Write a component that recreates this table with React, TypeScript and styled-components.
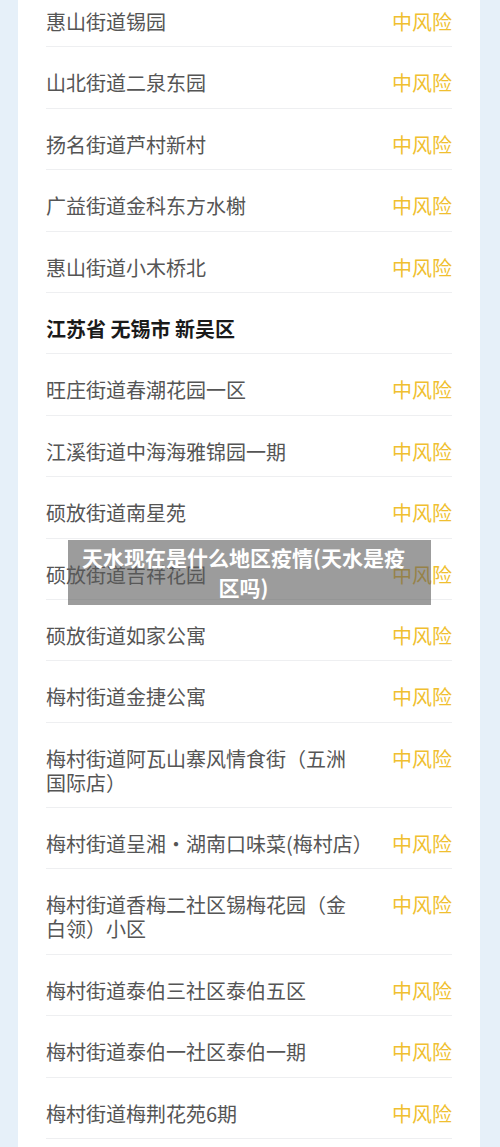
import React from 'react';
import styled, {createGlobalStyle} from 'styled-components';

const GlobalStyle = createGlobalStyle`
  html, body {
    margin: 0;
    padding: 0;
    background: #e6f0f9;
    font-family: "Noto Sans CJK SC", "Noto Sans", sans-serif;
  }
`;

const Page = styled.div`
  position: relative;
  width: 500px;
  height: 1147px;
  overflow: hidden;
  background: #e6f0f9;
  display: flex;
  justify-content: flex-start;
  padding-left: 18px;
  box-sizing: border-box;
`;

const Card = styled.div`
  width: 462px;
  background: #ffffff;
  margin-top: -14px;
  display: flex;
  flex-direction: column;
`;

const Row = styled.div`
  margin: 0 28px;
  padding: 24px 0 12.4px 0;
  border-bottom: 1px solid #eeeff1;
  display: flex;
  justify-content: space-between;
  align-items: flex-start;
`;

const Name = styled.span<{ $header?: boolean }>`
  max-width: 318px;
  font-size: 20px;
  line-height: 24px;
  color: ${p => (p.$header ? '#1a1a1a' : '#555555')};
  font-weight: ${p => (p.$header ? 700 : 400)};
  white-space: pre-wrap;
`;

const Risk = styled.span`
  font-size: 20px;
  line-height: 24px;
  color: #f0bf30;
  white-space: nowrap;
`;

// title banner laid over the list
const Overlay = styled.div`
  position: absolute;
  left: 68px;
  top: 540px;
  width: 363px;
  height: 65px;
  box-sizing: border-box;
  padding: 2px 20px 2px 8px;
  background: rgba(90, 90, 90, 0.6);
  color: #ffffff;
  font-size: 21px;
  font-weight: 700;
  line-height: 30px;
  text-align: center;
`;

type Item = { name: string; header?: boolean };

const items: Item[] = [
    {name: '惠山街道锡园'},
    {name: '山北街道二泉东园'},
    {name: '扬名街道芦村新村'},
    {name: '广益街道金科东方水榭'},
    {name: '惠山街道小木桥北'},
    {name: '江苏省 无锡市 新吴区', header: true},
    {name: '旺庄街道春潮花园一区'},
    {name: '江溪街道中海海雅锦园一期'},
    {name: '硕放街道南星苑'},
    {name: '硕放街道吉祥花园'},
    {name: '硕放街道如家公寓'},
    {name: '梅村街道金捷公寓'},
    {name: '梅村街道阿瓦山寨风情食街（五洲国际店）'},
    {name: '梅村街道呈湘·湖南口味菜(梅村店）'},
    {name: '梅村街道香梅二社区锡梅花园（金白领）小区'},
    {name: '梅村街道泰伯三社区泰伯五区'},
    {name: '梅村街道泰伯一社区泰伯一期'},
    {name: '梅村街道梅荆花苑6期'},
];

const App = () => {
    return <>
        <GlobalStyle/>
        <Page>
            <Card>
                {items.map((it, i) => (
                    <Row key={i}>
                        <Name $header={it.header}>{it.name}</Name>
                        {!it.header && <Risk>中风险</Risk>}
                    </Row>
                ))}
            </Card>
            <Overlay>天水现在是什么地区疫情(天水是疫区吗)</Overlay>
        </Page>
    </>;
};

export default App;
